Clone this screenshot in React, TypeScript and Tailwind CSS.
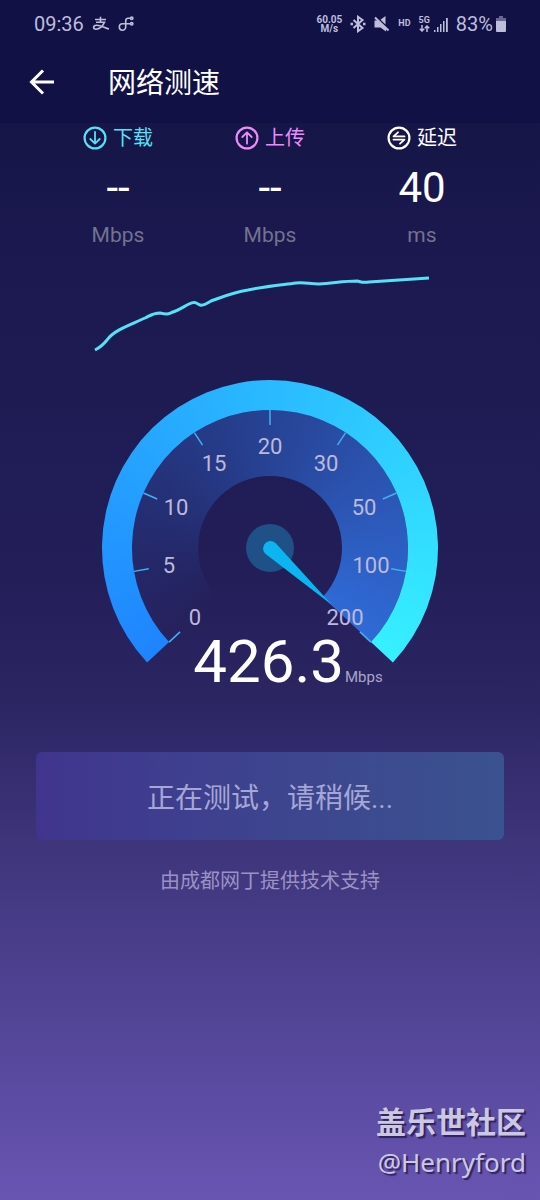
import type { ReactNode } from 'react'

const CENTER = 168
const LABELS = ['0', '5', '10', '15', '20', '30', '50', '100', '200']
const START = 227
const SWEEP = 266

// degrees run clockwise from twelve o'clock
function polar(radius: number, deg: number) {
  const rad = (deg * Math.PI) / 180
  return { x: CENTER + radius * Math.sin(rad), y: CENTER - radius * Math.cos(rad) }
}

function band(outer: number, inner: number) {
  const a = polar(outer, START)
  const b = polar(outer, START + SWEEP)
  const c = polar(inner, START + SWEEP)
  const d = polar(inner, START)
  return `M${a.x} ${a.y}A${outer} ${outer} 0 1 1 ${b.x} ${b.y}L${c.x} ${c.y}A${inner} ${inner} 0 1 0 ${d.x} ${d.y}Z`
}

const labelSpots = [
  { x: 93, y: 245 },
  { x: 67, y: 193 },
  { x: 74, y: 135 },
  { x: 112, y: 91 },
  { x: 168, y: 74 },
  { x: 224, y: 91 },
  { x: 262, y: 135 },
  { x: 269, y: 193 },
  { x: 243, y: 245 },
]

function StatusBar() {
  return (
    <div className="flex h-12 items-center justify-between pr-[34px] pl-[34px] text-[#bebddb]">
      <div className="flex items-center gap-2">
        <span className="text-xl">09:36</span>
        <svg className="h-4 w-[18px]" viewBox="0 0 18 16" fill="none" stroke="currentColor" strokeWidth="1.6" aria-hidden="true">
          <path d="M3 3.500h11M8.500.8v5.200M4 6.200h8.500C11 9.500 8 13.200 4 13.200 1 13.200.5 9.500 4.500 9.200c4-.2 8 2.600 12.500 3.800" />
        </svg>
        <svg className="h-4 w-4" viewBox="0 0 16 16" fill="none" stroke="currentColor" strokeWidth="1.6" aria-hidden="true">
          <path d="M12.500 2.200H10C8.500 2.200 7.700 3.400 7.700 5v6a3.200 3.200 0 1 1-3.200-3.200h8" />
          <circle cx="13.700" cy="2.200" r="1.200" />
          <circle cx="13.700" cy="7.800" r="1.200" />
        </svg>
      </div>
      <div className="flex items-center gap-2">
        <span className="text-center text-[10px] leading-[9px] font-bold">60.05<br />M/s</span>
        <svg className="h-[18px] w-4" viewBox="0 0 16 18" fill="none" stroke="currentColor" strokeWidth="2" aria-hidden="true">
          <path d="m3.500 5 9 8L8 16.200V1.800L12.500 5l-9 8" />
          <path d="M.5 9H3M13 9h2.500" strokeWidth="2.400" />
        </svg>
        <svg className="size-4" viewBox="0 0 16 16" fill="currentColor" aria-hidden="true">
          <path d="M.5 4.500H4l8 8v3L6.500 11.500h-6zM6.500 3.800 11.500 0v8.500z" />
          <path d="m1 1.500 13.500 13" stroke="currentColor" strokeWidth="2" />
        </svg>
        <span className="text-[9px] font-bold">HD</span>
        <div className="flex items-end gap-1">
          <div className="flex flex-col items-center">
            <span className="text-[9px] leading-[9px] font-bold">5G</span>
            <svg className="h-[7px] w-[11px]" viewBox="0 0 11 7" fill="none" stroke="currentColor" strokeWidth="1.500" aria-hidden="true">
              <path d="M3 0v6M.8 3.800 3 6l2.200-2.200M8 7V1M5.800 3.200 8 1l2.200 2.200" />
            </svg>
          </div>
          <svg className="h-[15px] w-[14px]" viewBox="0 0 14 15" fill="currentColor" aria-hidden="true">
            <path d="M0 13h1.500v2H0zM3 10h1.500v5H3zM6 7h1.500v8H6zM9 4h1.500v11H9zM12 1h1.800v14H12z" />
          </svg>
        </div>
        <div className="flex items-center gap-[3px]">
          <span className="text-xl">83%</span>
          <svg className="h-4 w-[10px]" viewBox="0 0 10 16" fill="currentColor" aria-hidden="true">
            <path d="M3 0h4v2h3v3H0V2h3z" opacity=".5" />
            <path d="M0 5h10v10a1 1 0 0 1-1 1H1a1 1 0 0 1-1-1z" />
          </svg>
        </div>
      </div>
    </div>
  )
}

function CircleIcon({ children }: { children: ReactNode }) {
  return (
    <svg
      className="size-6"
      viewBox="0 0 24 24"
      fill="none"
      stroke="currentColor"
      strokeWidth="1.800"
      strokeLinecap="round"
      strokeLinejoin="round"
      aria-hidden="true"
    >
      <circle cx="12" cy="12" r="10.400" strokeWidth="2.200" />
      {children}
    </svg>
  )
}

const stats = [
  { name: '下载', value: '--', unit: 'Mbps', color: 'text-[#56e2f6]', icon: <path d="M12 6v11.500M7.300 13l4.700 4.700 4.700-4.700" /> },
  { name: '上传', value: '--', unit: 'Mbps', color: 'text-[#eb8cfb]', icon: <path d="M12 17.700V6.300M7.300 11 12 6.300l4.700 4.700" /> },
  { name: '延迟', value: '40', unit: 'ms', color: 'text-white', icon: <path d="M11 6.300 6.500 10.400h11M6.500 13.600h11L13 17.700" /> },
]

function Gauge() {
  return (
    <svg className="mx-auto block h-[284px] w-[336px]" viewBox="0 0 336 284" role="img" aria-label="426.3 Mbps">
      <defs>
        <clipPath id="ring">
          <path d={band(168, 138)} />
        </clipPath>
        <clipPath id="dial">
          <path d={band(138, 72)} />
        </clipPath>
      </defs>
      <g clipPath="url(#dial)">
        <foreignObject width="336" height="336">
          <div className="size-[336px] bg-[conic-gradient(from_227deg,#2f6ad600_0deg,#2f6ad6_266deg,#2f6ad6_300deg,#2f6ad600_300deg)]" />
        </foreignObject>
      </g>
      <g clipPath="url(#ring)">
        <foreignObject width="336" height="336">
          <div className="size-[336px] bg-[conic-gradient(from_227deg,#1e84ff_0deg,#36f0ff_266deg,#36f0ff_300deg,#1e84ff_300deg)]" />
        </foreignObject>
      </g>
      {LABELS.map((label, i) => {
        const deg = START + (SWEEP / 8) * i
        const from = polar(138, deg)
        const to = polar(123, deg)
        return (
          <g key={label}>
            <line x1={from.x} y1={from.y} x2={to.x} y2={to.y} stroke="#3fb0f5" strokeWidth="1.500" />
            <text x={labelSpots[i].x} y={labelSpots[i].y} textAnchor="middle" className="fill-[#bdb9dc] text-[22px]">
              {label}
            </text>
          </g>
        )
      })}
      <circle cx={CENTER} cy={CENTER} r="24" fill="#1f5088" />
      <path d="M174 163.500 230 225 163 173.500A7.300 7.300 0 1 1 174 163.500Z" fill="#0ab5f0" />
    </svg>
  )
}

export default function App() {
  return (
    <div className="flex min-h-screen flex-col bg-[linear-gradient(#12123f_0%,#1b1950_22%,#231e58_48%,#2b2562_58%,#3d347a_70%,#6855b2_100%)] font-[Roboto,'Noto_Sans_CJK_SC',sans-serif] text-white">
      <div className="bg-[#111146]">
        <StatusBar />
        <header className="flex h-[75px] items-center gap-[50px] pb-1 pl-[26px]">
          <button type="button" aria-label="返回" className="-mt-1">
            <svg className="size-8" viewBox="0 0 32 32" fill="none" stroke="currentColor" strokeWidth="3" aria-hidden="true">
              <path d="M28 16H6M17 4.500 5.500 16 17 27.500" />
            </svg>
          </button>
          <h1 className="text-[28px]">网络测速</h1>
        </header>
      </div>

      <main className="px-9">
        <section className="grid grid-cols-3 px-[6px]">
          {stats.map((stat) => (
            <div key={stat.name} className="flex flex-col items-center">
              <div className={`flex h-[30px] items-center gap-1.5 text-xl ${stat.color}`}>
                <CircleIcon>{stat.icon}</CircleIcon>
                <span>{stat.name}</span>
              </div>
              <p className="text-[42px] leading-[70px]">{stat.value}</p>
              <p className="text-[21px] leading-6 text-[#74728f]">{stat.unit}</p>
            </div>
          ))}
        </section>

        <svg className="mx-auto mt-6 block h-[86px] w-[352px]" viewBox="-8 0 352 86" fill="none" aria-hidden="true">
          <path
            d="M-7 79C-1 76 1 74 5 69C12 59 28 54 43 47C49 44 51 42 58 42C66 44 66 43 71 41C77 39 81 36 87 33C93 30 94 32 98 34C102 35 105 32 109 30C120 26 132 21 146 19C165 15 179 14 194 12C203 11 207 13 217 13C232 12 243 10 255 10C260 11 260 12 267 11L327 7"
            stroke="#56e2f6"
            strokeWidth="3"
          />
        </svg>

        <div className="mt-[23px]">
          <Gauge />
          <p className="-mt-9 flex items-baseline justify-center gap-px pl-9">
            <span className="text-[60px] leading-[68px]">426.3</span>
            <span className="text-[15px] text-[#aaa6c8]">Mbps</span>
          </p>
        </div>

        <button
          type="button"
          disabled
          className="mt-14 h-[88px] w-full rounded-md bg-linear-to-r from-[#40358e] to-[#3a528f] pt-1.5 text-[28px] text-[#a6a7d6]"
        >
          正在测试，请稍候...
        </button>
        <p className="mt-[25px] text-center text-xl leading-8 text-[#9b92c4]">由成都网丁提供技术支持</p>
      </main>

      <footer className="mt-auto pr-3.5 pb-5 text-right text-[#cdc8e2] [text-shadow:2px_2px_1px_#2d2360]">
        <p className="text-[30px] leading-[42px] font-bold">盖乐世社区</p>
        <p className="font-['Noto_Sans',sans-serif] text-[26px] leading-9">@Henryford</p>
      </footer>
    </div>
  )
}
